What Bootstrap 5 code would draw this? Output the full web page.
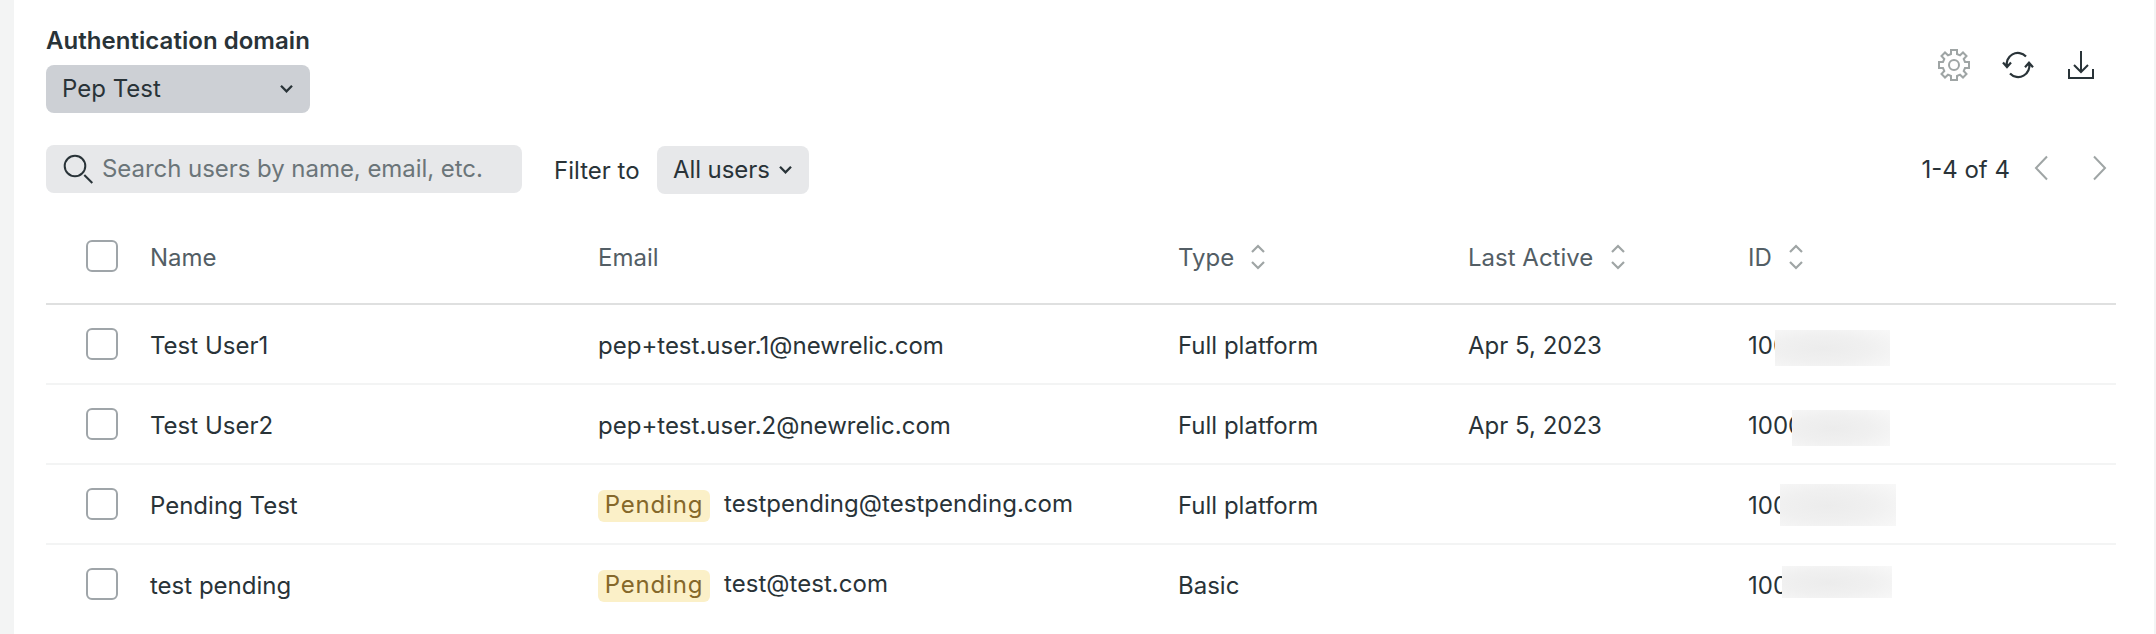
<!DOCTYPE html>
<html lang="en">
<head>
<meta charset="utf-8">
<title>Users</title>
<link rel="stylesheet" href="https://cdn.jsdelivr.net/npm/bootstrap@5.3.0/dist/css/bootstrap.min.css">
<style>
  body { background: #f3f4f4; font-family: Inter, sans-serif; font-size: 24px; line-height: 32px; color: #293338; height: 634px; overflow: hidden; }
  svg { display: block; fill: none; flex: none; }
  .panel { margin: 0 2px 0 14px; height: 634px; background: #fff; padding: 25px 38px 0 32px; }
  .domain-label { font-weight: 600; letter-spacing: .04px; }
  .ctl { background: #e7e8ea; border: 0; border-radius: 8px; height: 48px; color: inherit; font-size: 24px; line-height: 32px; padding: 0 17px 0 16px; }
  .domain-select { background: #cdd0d5; width: 264px; margin-top: 8px; }
  .search-box { width: 476px; color: #6b7579; letter-spacing: -.05px; }
  .filter-label { margin: 10px 0 0 32px; width: 103px; }
  .filter-btn { width: 152px; margin-top: 1px; letter-spacing: -.08px; }
  .toolbar { margin-top: 32px; height: 64px; }
  .tools { gap: 31px; margin: 24px 19px 0 0; }
  .tools svg:first-child { margin-right: 1px; }
  .pager { margin: 9px 9px 0 0; }
  .pager svg { margin: 0 0 4px 24px; }
  .pager svg + svg { margin-left: 45px; }
  .users { table-layout: fixed; border-collapse: separate; border-spacing: 0; width: 2070px; }
  .users th, .users td { font-weight: 400; padding: 3px 0 0; height: 80px; vertical-align: middle; border-bottom: 2px solid #f3f4f4; position: relative; }
  .users th { height: 96px; color: #535e65; border-color: #dfe0e0; }
  .users th svg { margin: 0 0 1px 17px; }
  .users th .wide svg { margin-left: 18px; }
  .users tbody tr:last-child td { border-color: transparent; }
  .users .pick { padding: 0 0 0 40px; }
  .users .form-check-input { display: block; width: 32px; height: 32px; margin: 0; border: 2px solid #9fa5a9; border-radius: 6px; }
  .pending { background: #fbf0c8; color: #85682a; border-radius: 6px; width: 112px; line-height: 30px; height: 32px; text-align: center; letter-spacing: .8px; margin-right: 14px; }
  .mail { line-height: 28px; letter-spacing: .04px; }
  .redacted { position: absolute; left: 27px; top: 25px; width: 115px; height: 36px; background: radial-gradient(ellipse 80% 75% at 42% 52%, #ececec, #f0f0f0 50%, #f8f8f8); }
  .redacted.r2 { left: 44px; width: 98px; }
  .redacted.r3 { left: 32px; top: 19px; width: 116px; height: 42px; }
  .redacted.r4 { left: 34px; top: 21px; width: 110px; height: 32px; }
</style>
<script src="https://cdn.jsdelivr.net/npm/bootstrap@5.3.0/dist/js/bootstrap.bundle.min.js"></script>
</head>
<body>
<svg width="0" height="0" class="position-absolute">
  <symbol id="caret" viewBox="0 0 13 10"><path d="M1 1.800 6.500 7.300 12 1.800" stroke="#293338" stroke-width="2.300"/></symbol>
  <symbol id="sort" viewBox="0 0 14 26"><path d="M1 8 7 2l6 6M1 18l6 6 6-6" stroke="#9fa5a5" stroke-width="2.200"/></symbol>
</svg>
<main class="panel">
  <div class="d-flex justify-content-between align-items-start">
    <div>
      <div class="domain-label">Authentication domain</div>
      <button class="ctl domain-select d-flex align-items-center justify-content-between">Pep Test <svg width="13" height="10"><use href="#caret"/></svg></button>
    </div>
    <div class="tools d-flex">
      <svg width="32" height="32" viewBox="0 0 32 32" stroke="#9fa5a5" stroke-width="2"><path d="M13 1h6v4l3 1.300L25 3.500 28.500 7l-2.800 3L27 13h4v6h-4l-1.300 3 2.800 3-3.500 3.500-3-2.800-3 1.300v4h-6v-4l-3-1.300-3 2.800L3.500 25l2.800-3L5 19H1v-6h4l1.300-3-2.800-3L7 3.500l3 2.800L13 5z"/><circle cx="16" cy="16" r="5"/></svg>
      <svg width="32" height="32" viewBox="0 0 32 32" stroke="#293338" stroke-width="2.200"><path d="M24 7.500A11.200 11.200 0 0 0 5 18M1 13.500l4 4.500 4-4.500M8 24.500A11.200 11.200 0 0 0 27 14M23 18.200l4-4.500 4 4.500"/></svg>
      <svg width="32" height="32" viewBox="0 0 32 32" stroke="#293338" stroke-width="2"><path d="M16 2v21M9 16l7 7 7-7M4 20v9h24v-9"/></svg>
    </div>
  </div>
  <div class="toolbar d-flex align-items-start">
    <div class="ctl search-box d-flex align-items-center"><svg width="32" height="30" viewBox="0 0 32 30" stroke="#293338" stroke-width="2"><circle cx="13" cy="12" r="10.300"/><path d="M22.300 21l8 8"/></svg><span class="ms-2">Search users by name, email, etc.</span></div>
    <span class="filter-label">Filter to</span>
    <button class="ctl filter-btn d-flex align-items-center justify-content-between">All users <svg width="13" height="10"><use href="#caret"/></svg></button>
    <div class="ms-auto d-flex align-items-center pager"><span>1-4 of 4</span>
      <svg width="14" height="26" viewBox="0 0 14 26" stroke="#9fa5a5" stroke-width="2"><path d="M13 1.500 2 13l11 11.500"/></svg>
      <svg width="14" height="26" viewBox="0 0 14 26" stroke="#9fa5a5" stroke-width="2"><path d="M1 1.500 12 13 1 24.500"/></svg>
    </div>
  </div>
  <table class="users">
    <colgroup><col style="width:104px"><col style="width:448px"><col style="width:580px"><col style="width:290px"><col style="width:280px"><col></colgroup>
    <thead><tr>
      <th class="pick"><input class="form-check-input" type="checkbox"></th><th>Name</th><th>Email</th>
      <th><div class="d-flex align-items-center">Type<svg width="14" height="26"><use href="#sort"/></svg></div></th>
      <th><div class="d-flex align-items-center wide">Last Active<svg width="14" height="26"><use href="#sort"/></svg></div></th>
      <th><div class="d-flex align-items-center">ID<svg width="14" height="26"><use href="#sort"/></svg></div></th>
    </tr></thead>
    <tbody>
    <tr><td class="pick"><input class="form-check-input" type="checkbox"></td><td>Test User1</td><td>pep+test.user.1@newrelic.com</td><td>Full platform</td><td>Apr 5, 2023</td><td>100<span class="redacted"></span></td></tr>
    <tr><td class="pick"><input class="form-check-input" type="checkbox"></td><td>Test User2</td><td>pep+test.user.2@newrelic.com</td><td>Full platform</td><td>Apr 5, 2023</td><td>1000<span class="redacted r2"></span></td></tr>
    <tr><td class="pick"><input class="form-check-input" type="checkbox"></td><td>Pending Test</td><td><div class="d-flex"><span class="pending">Pending</span><span class="mail">testpending@testpending.com</span></div></td><td>Full platform</td><td></td><td>100<span class="redacted r3"></span></td></tr>
    <tr><td class="pick"><input class="form-check-input" type="checkbox"></td><td>test pending</td><td><div class="d-flex"><span class="pending">Pending</span><span class="mail">test@test.com</span></div></td><td>Basic</td><td></td><td>100<span class="redacted r4"></span></td></tr>
    </tbody>
  </table>
</main>
</body>
</html>
